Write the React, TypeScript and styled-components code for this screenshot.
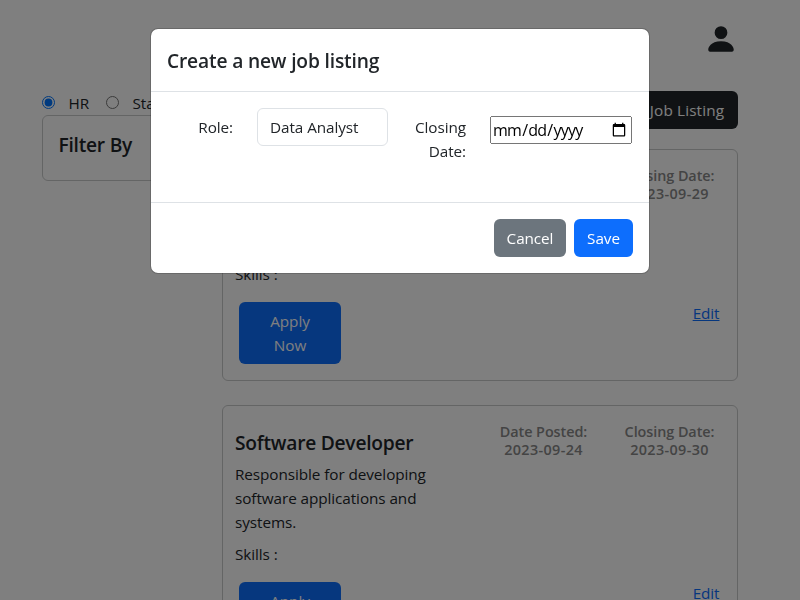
import React from "react";
import styled, { createGlobalStyle } from "styled-components";

const GlobalStyle = createGlobalStyle`
  * { box-sizing: border-box; }
  html, body { margin: 0; height: 600px; overflow: hidden; background: #fff; }
  body {
    font-family: "Segoe UI", "Open Sans", "Noto Sans", sans-serif;
    font-size: 15.3px;
    line-height: 24px;
    letter-spacing: -0.08px;
    color: #212529;
  }
  h1, h2, p { margin: 0; }
`;

const Page = styled.div`
  height: 600px;
  overflow: hidden;
  padding: 22px 62px 0 42px;
`;

const TopBar = styled.header`
  display: flex;
  justify-content: flex-end;
  height: 69px;
`;

const Columns = styled.div`
  display: grid;
  grid-template-columns: 156px 516px;
  column-gap: 24px;
`;

const Views = styled.div`
  display: flex;
  align-items: center;
  height: 24px;
  white-space: nowrap;
`;

const Radio = styled.input`
  width: 13px;
  height: 13px;
  margin: 0 13.5px 2px 0;
`;

const ViewLabel = styled.label`
  display: flex;
  align-items: center;
  margin-right: 17px;
`;

const Filter = styled.section`
  height: 66px;
  padding: 17px 15.5px;
  border: 1px solid #c9cacb;
  border-radius: 6px;
`;

const Heading = styled.h2`
  font-size: 19.2px;
  line-height: 24px;
  font-weight: 600;
  letter-spacing: -0.24px;
`;

const Listings = styled.main`
  display: flex;
  flex-direction: column;
`;

const Button = styled.button<{ $color: string; $width: number }>`
  width: ${(p) => p.$width}px;
  padding: 7px 12px;
  border: 0;
  border-radius: 6px;
  background: ${(p) => p.$color};
  color: #fff;
  font: inherit;
  letter-spacing: inherit;
  white-space: nowrap;
`;

const ApplyButton = styled(Button)`
  margin: 16px 0 0 4px;
  padding: 7px 24px;
  white-space: normal;
`;

const NewListing = styled(Button)`
  align-self: flex-end;
  margin-bottom: 20px;
  letter-spacing: 0.14px;
`;

const Card = styled.article`
  display: grid;
  grid-template-columns: 203px 1fr;
  justify-content: space-between;
  margin-bottom: 24px;
  padding: 0 17.5px 16px 12px;
  border: 1px solid #c9cacb;
  border-radius: 6px;
`;

const Summary = styled.div`
  padding-top: 25px;
`;

const Description = styled.p`
  margin: 7px 0 8px;
`;

const Side = styled.div`
  display: flex;
  flex-direction: column;
  justify-content: space-between;
  align-items: flex-end;
  padding: 17px 0 39px;
`;

const Dates = styled.div`
  display: flex;
  gap: 35px;
  margin-right: 4.5px;
`;

const DateBlock = styled.div`
  width: 91px;
  font-size: 14.4px;
  line-height: 18px;
  font-weight: 600;
  letter-spacing: -0.06px;
  text-align: center;
  white-space: nowrap;
  color: #888;
`;

const DateValue = styled.div`
  letter-spacing: 0.35px;
`;

const EditLink = styled.a`
  color: #0d6efd;
  text-decoration: underline;
`;

const Backdrop = styled.div`
  position: fixed;
  inset: 0;
  padding-top: 28px;
  background: rgba(0, 0, 0, 0.5);
`;

const Dialog = styled.div`
  width: 500px;
  margin: 0 auto;
  border: 1px solid rgba(0, 0, 0, 0.175);
  border-radius: 8px;
  background: #fff;
  background-clip: padding-box;
`;

const DialogHeader = styled.div`
  height: 63px;
  padding: 20px 16px;
  border-bottom: 1px solid #dee2e6;
`;

const DialogTitle = styled(Heading)`
  letter-spacing: -0.16px;
`;

const DialogBody = styled.div`
  display: flex;
  align-items: flex-start;
  height: 110px;
  padding: 16px 16px 0;
`;

const FieldLabel = styled.label<{ $width: number; $gap: number }>`
  width: ${(p) => p.$width}px;
  margin-right: ${(p) => p.$gap}px;
  padding-top: 7px;
  text-align: right;
`;

const RoleInput = styled.input`
  width: 131px;
  height: 38px;
  padding: 6px 12px;
  border: 1px solid #dee2e6;
  border-radius: 6px;
  color: #212529;
  font: inherit;
  letter-spacing: inherit;
`;

const DateInput = styled.input`
  width: 142px;
  height: 28px;
  margin-top: 8px;
  padding: 1px 1px 1px 0;
  font: inherit;
  font-size: 16px;
  letter-spacing: -0.75px;
`;

const DialogFooter = styled.div`
  display: flex;
  justify-content: flex-end;
  gap: 8px;
  padding: 16px;
  border-top: 1px solid #dee2e6;
`;

const ProfileIcon = () => (
  <svg width="34" height="34" viewBox="0 0 16 16" fill="#212529">
    <path d="M3 14s-1 0-1-1 1-4 6-4 6 3 6 4-1 1-1 1zm5-6a3 3 0 1 0 0-6 3 3 0 0 0 0 6" />
  </svg>
);

type Job = { title: string; text: string; posted: string; closing: string };

const jobs: Job[] = [
  {
    title: "Data Analyst",
    text: "Responsible for analysing business data.",
    posted: "2023-09-24",
    closing: "2023-09-29",
  },
  {
    title: "Software Developer",
    text: "Responsible for developing software applications and systems.",
    posted: "2023-09-24",
    closing: "2023-09-30",
  },
];

const JobCard = ({ title, text, posted, closing }: Job) => (
  <Card>
    <Summary>
      <Heading>{title}</Heading>
      <Description>{text}</Description>
      <p>Skills :</p>
      <ApplyButton $color="#0d6efd" $width={102}>Apply Now</ApplyButton>
    </Summary>
    <Side>
      <Dates>
        <DateBlock>Date Posted:<DateValue>{posted}</DateValue></DateBlock>
        <DateBlock>Closing Date:<DateValue>{closing}</DateValue></DateBlock>
      </Dates>
      <EditLink>Edit</EditLink>
    </Side>
  </Card>
);

export default function App() {
  return (
    <>
      <GlobalStyle />
      <Page>
        <TopBar><ProfileIcon /></TopBar>
        <Columns>
          <aside>
            <Views>
              <ViewLabel><Radio type="radio" name="view" defaultChecked />HR</ViewLabel>
              <ViewLabel><Radio type="radio" name="view" />Staff</ViewLabel>
            </Views>
            <Filter><Heading>Filter By</Heading></Filter>
          </aside>
          <Listings>
            <NewListing $color="#212529" $width={154}>Create Job Listing</NewListing>
            {jobs.map((job) => <JobCard key={job.title} {...job} />)}
          </Listings>
        </Columns>
      </Page>
      <Backdrop>
        <Dialog role="dialog">
          <DialogHeader><DialogTitle as="h1">Create a new job listing</DialogTitle></DialogHeader>
          <DialogBody>
            <FieldLabel $width={66} $gap={24}>Role:</FieldLabel>
            <RoleInput defaultValue="Data Analyst" />
            <FieldLabel $width={78} $gap={24}>Closing Date:</FieldLabel>
            <DateInput type="date" />
          </DialogBody>
          <DialogFooter>
            <Button $color="#6c757d" $width={72}>Cancel</Button>
            <Button $color="#0d6efd" $width={59}>Save</Button>
          </DialogFooter>
        </Dialog>
      </Backdrop>
    </>
  );
}
